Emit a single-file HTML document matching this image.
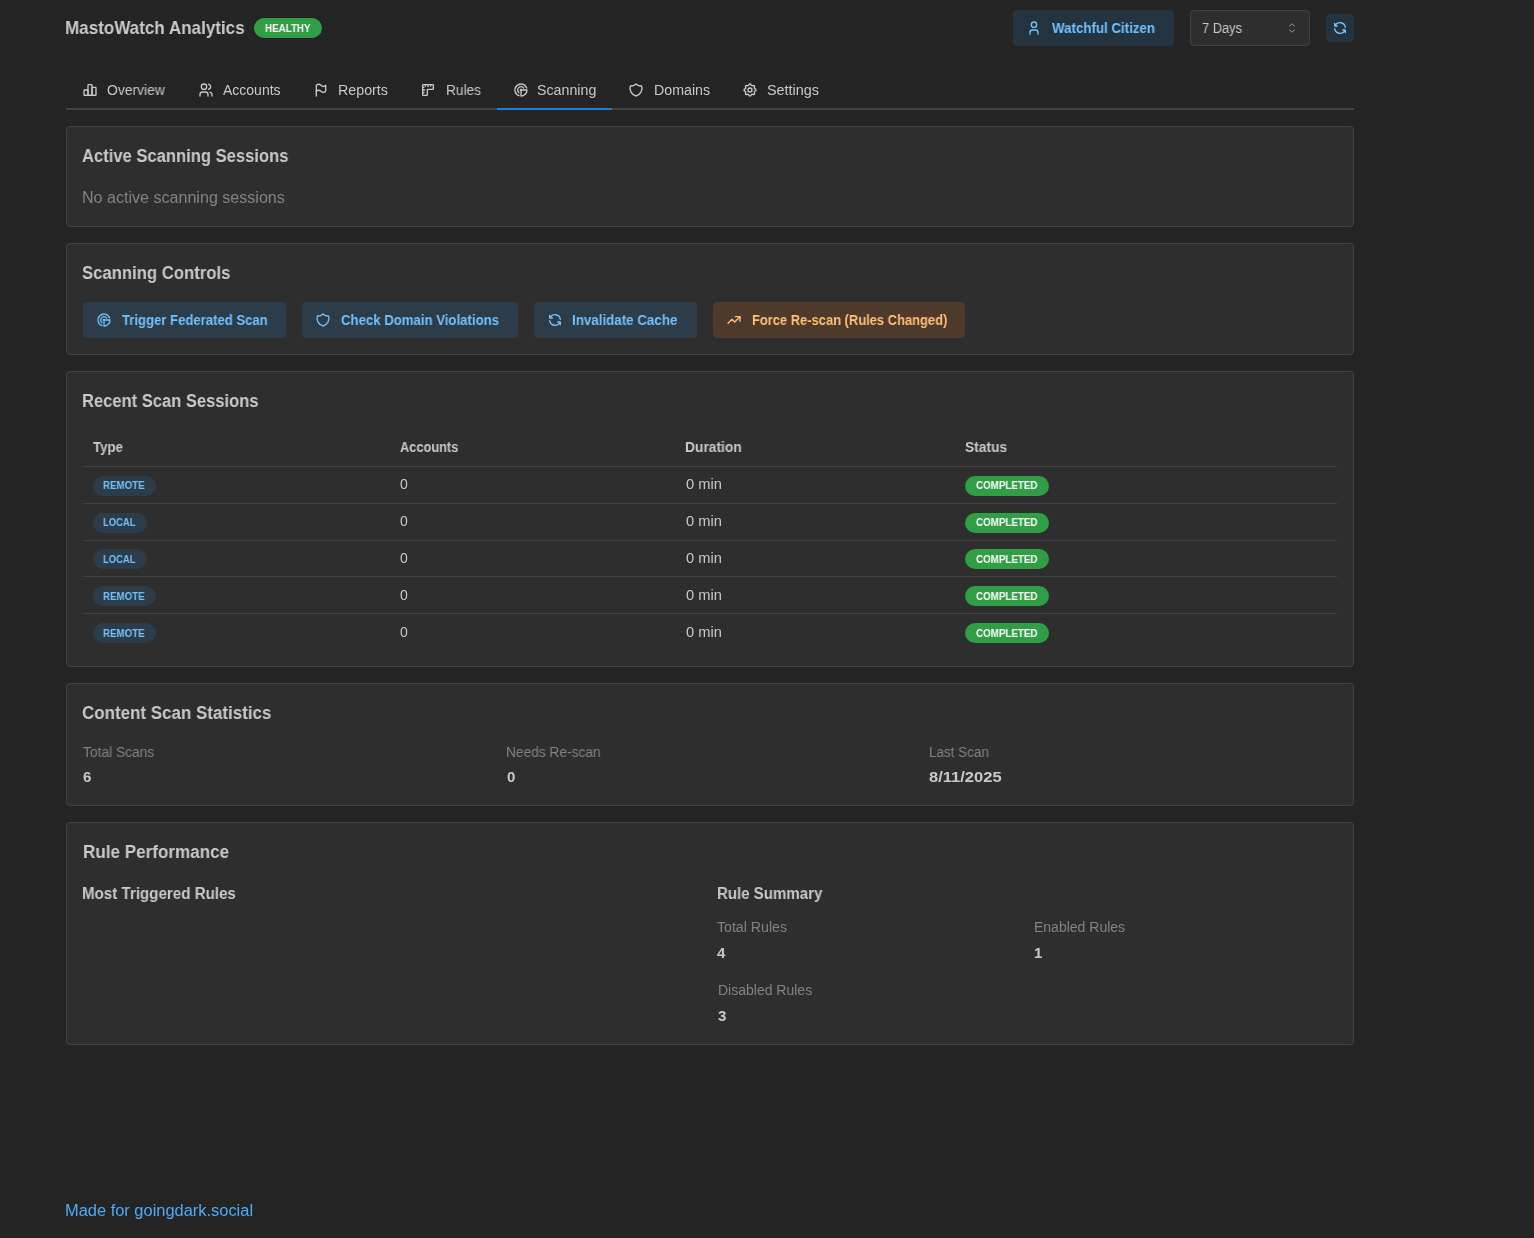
<!DOCTYPE html>
<html><head><meta charset="utf-8"><title>MastoWatch Analytics</title>
<style>
html,body{margin:0;padding:0}
body{background:#242424;width:1534px;height:1238px;overflow:hidden;position:relative;font-family:"Liberation Sans",sans-serif}
.t{position:absolute;line-height:1;white-space:nowrap;transform-origin:0 0;will-change:transform}
</style></head><body>
<div style='position:absolute;left:66px;top:126px;width:1286px;height:99px;background:#2e2e2e;border:1px solid #424242;border-radius:4px'></div>
<div style='position:absolute;left:66px;top:243px;width:1286px;height:110px;background:#2e2e2e;border:1px solid #424242;border-radius:4px'></div>
<div style='position:absolute;left:66px;top:371px;width:1286px;height:294px;background:#2e2e2e;border:1px solid #424242;border-radius:4px'></div>
<div style='position:absolute;left:66px;top:683px;width:1286px;height:121px;background:#2e2e2e;border:1px solid #424242;border-radius:4px'></div>
<div style='position:absolute;left:66px;top:822px;width:1286px;height:221px;background:#2e2e2e;border:1px solid #424242;border-radius:4px'></div>
<div style='position:absolute;left:254px;top:18px;width:68px;height:20px;background:#2f9e44;border-radius:10px'></div>
<div style='position:absolute;left:1013px;top:10px;width:161px;height:36px;background:rgba(34,139,230,0.15);border-radius:4px'></div>
<svg style='position:absolute;left:1026px;top:20px' width='16' height='16' viewBox='0 0 24 24' fill='none' stroke='#74c0fc' stroke-width='2' stroke-linecap='round' stroke-linejoin='round'><path d="M8 7a4 4 0 1 0 8 0a4 4 0 0 0 -8 0"/><path d="M6 21v-2a4 4 0 0 1 4 -4h4a4 4 0 0 1 4 4v2"/></svg>
<div style='position:absolute;left:1190px;top:10px;width:118px;height:34px;background:#2e2e2e;border:1px solid #424242;border-radius:4px'></div>
<svg style='position:absolute;left:1284px;top:20px' width='16' height='16' viewBox='0 0 15 15' fill='#828282'><path d='M4.93179 5.43179C4.75605 5.60753 4.75605 5.89245 4.93179 6.06819C5.10753 6.24392 5.39245 6.24392 5.56819 6.06819L7.49999 4.13638L9.43179 6.06819C9.60753 6.24392 9.89245 6.24392 10.0682 6.06819C10.2439 5.89245 10.2439 5.60753 10.0682 5.43179L7.81819 3.18179C7.73379 3.0974 7.61933 3.04999 7.49999 3.04999C7.38064 3.04999 7.26618 3.0974 7.18179 3.18179L4.93179 5.43179ZM10.0682 9.56819C10.2439 9.39245 10.2439 9.10753 10.0682 8.93179C9.89245 8.75606 9.60753 8.75606 9.43179 8.93179L7.49999 10.8636L5.56819 8.93179C5.39245 8.75606 5.10753 8.75606 4.93179 8.93179C4.75605 9.10753 4.75605 9.39245 4.93179 9.56819L7.18179 11.8182C7.26618 11.9026 7.38064 11.95 7.49999 11.95C7.61933 11.95 7.73379 11.9026 7.81819 11.8182L10.0682 9.56819Z'/></svg>
<div style='position:absolute;left:1326px;top:14px;width:28px;height:28px;background:rgba(34,139,230,0.15);border-radius:4px'></div>
<svg style='position:absolute;left:1332px;top:20px' width='16' height='16' viewBox='0 0 24 24' fill='none' stroke='#74c0fc' stroke-width='2' stroke-linecap='round' stroke-linejoin='round'><path d="M20 11a8.1 8.1 0 0 0 -15.5 -2m-.5 -4v4h4"/><path d="M4 13a8.1 8.1 0 0 0 15.5 2m.5 4v-4h-4"/></svg>
<div style='position:absolute;left:66px;top:108px;width:1288px;height:2px;background:#424242'></div>
<div style='position:absolute;left:497px;top:108px;width:115px;height:2px;background:#1c7ed6'></div>
<svg style='position:absolute;left:82px;top:82px' width='16' height='16' viewBox='0 0 24 24' fill='none' stroke='#c9c9c9' stroke-width='2' stroke-linecap='round' stroke-linejoin='round'><path d="M3 13a1 1 0 0 1 1 -1h4a1 1 0 0 1 1 1v6a1 1 0 0 1 -1 1h-4a1 1 0 0 1 -1 -1z"/><path d="M15 9a1 1 0 0 1 1 -1h4a1 1 0 0 1 1 1v10a1 1 0 0 1 -1 1h-4a1 1 0 0 1 -1 -1z"/><path d="M9 5a1 1 0 0 1 1 -1h4a1 1 0 0 1 1 1v14a1 1 0 0 1 -1 1h-4a1 1 0 0 1 -1 -1z"/><path d="M4 20h14"/></svg>
<svg style='position:absolute;left:198px;top:82px' width='16' height='16' viewBox='0 0 24 24' fill='none' stroke='#c9c9c9' stroke-width='2' stroke-linecap='round' stroke-linejoin='round'><path d="M5 7a4 4 0 1 0 8 0a4 4 0 1 0 -8 0"/><path d="M3 21v-2a4 4 0 0 1 4 -4h4a4 4 0 0 1 4 4v2"/><path d="M16 3.13a4 4 0 0 1 0 7.75"/><path d="M21 21v-2a4 4 0 0 0 -3 -3.85"/></svg>
<svg style='position:absolute;left:313px;top:82px' width='16' height='16' viewBox='0 0 24 24' fill='none' stroke='#c9c9c9' stroke-width='2' stroke-linecap='round' stroke-linejoin='round'><path d="M5 5a5 5 0 0 1 7 0a5 5 0 0 0 7 0v9a5 5 0 0 1 -7 0a5 5 0 0 0 -7 0v-9z"/><path d="M5 21v-7"/></svg>
<svg style='position:absolute;left:420px;top:82px' width='16' height='16' viewBox='0 0 24 24' fill='none' stroke='#c9c9c9' stroke-width='2' stroke-linecap='round' stroke-linejoin='round'><path d="M5 4h14a1 1 0 0 1 1 1v5a1 1 0 0 1 -1 1h-7a1 1 0 0 0 -1 1v7a1 1 0 0 1 -1 1h-5a1 1 0 0 1 -1 -1v-14a1 1 0 0 1 1 -1"/><path d="M4 8l2 0"/><path d="M4 12l3 0"/><path d="M4 16l2 0"/><path d="M8 4l0 2"/><path d="M12 4l0 3"/><path d="M16 4l0 2"/></svg>
<svg style='position:absolute;left:513px;top:82px' width='16' height='16' viewBox='0 0 24 24' fill='none' stroke='#c9c9c9' stroke-width='2' stroke-linecap='round' stroke-linejoin='round'><path d="M21 12h-8a1 1 0 1 0 -1 1v8a9 9 0 0 0 9 -9"/><path d="M16 9a5 5 0 1 0 -7 7"/><path d="M20.486 9a9 9 0 1 0 -11.482 11.495"/></svg>
<svg style='position:absolute;left:628px;top:82px' width='16' height='16' viewBox='0 0 24 24' fill='none' stroke='#c9c9c9' stroke-width='2' stroke-linecap='round' stroke-linejoin='round'><path d="M12 3a12 12 0 0 0 8.5 3a12 12 0 0 1 -8.5 15a12 12 0 0 1 -8.5 -15a12 12 0 0 0 8.5 -3"/></svg>
<svg style='position:absolute;left:742px;top:82px' width='16' height='16' viewBox='0 0 24 24' fill='none' stroke='#c9c9c9' stroke-width='2' stroke-linecap='round' stroke-linejoin='round'><path d="M10.325 4.317c.426 -1.756 2.924 -1.756 3.35 0a1.724 1.724 0 0 0 2.573 1.066c1.543 -.94 3.31 .826 2.37 2.37a1.724 1.724 0 0 0 1.065 2.572c1.756 .426 1.756 2.924 0 3.35a1.724 1.724 0 0 0 -1.066 2.573c.94 1.543 -.826 3.31 -2.37 2.37a1.724 1.724 0 0 0 -2.572 1.065c-.426 1.756 -2.924 1.756 -3.35 0a1.724 1.724 0 0 0 -2.573 -1.066c-1.543 .94 -3.31 -.826 -2.37 -2.37a1.724 1.724 0 0 0 -1.065 -2.572c-1.756 -.426 -1.756 -2.924 0 -3.35a1.724 1.724 0 0 0 1.066 -2.573c-.94 -1.543 .826 -3.31 2.37 -2.37c1 .608 2.296 .07 2.572 -1.065z"/><path d="M9 12a3 3 0 1 0 6 0a3 3 0 0 0 -6 0"/></svg>
<div style='position:absolute;left:83px;top:302px;width:203px;height:36px;background:rgba(34,139,230,0.15);border-radius:4px'></div>
<svg style='position:absolute;left:96px;top:312px' width='16' height='16' viewBox='0 0 24 24' fill='none' stroke='#74c0fc' stroke-width='2' stroke-linecap='round' stroke-linejoin='round'><path d="M21 12h-8a1 1 0 1 0 -1 1v8a9 9 0 0 0 9 -9"/><path d="M16 9a5 5 0 1 0 -7 7"/><path d="M20.486 9a9 9 0 1 0 -11.482 11.495"/></svg>
<div style='position:absolute;left:302px;top:302px;width:216px;height:36px;background:rgba(34,139,230,0.15);border-radius:4px'></div>
<svg style='position:absolute;left:315px;top:312px' width='16' height='16' viewBox='0 0 24 24' fill='none' stroke='#74c0fc' stroke-width='2' stroke-linecap='round' stroke-linejoin='round'><path d="M12 3a12 12 0 0 0 8.5 3a12 12 0 0 1 -8.5 15a12 12 0 0 1 -8.5 -15a12 12 0 0 0 8.5 -3"/></svg>
<div style='position:absolute;left:534px;top:302px;width:163px;height:36px;background:rgba(34,139,230,0.15);border-radius:4px'></div>
<svg style='position:absolute;left:547px;top:312px' width='16' height='16' viewBox='0 0 24 24' fill='none' stroke='#74c0fc' stroke-width='2' stroke-linecap='round' stroke-linejoin='round'><path d="M20 11a8.1 8.1 0 0 0 -15.5 -2m-.5 -4v4h4"/><path d="M4 13a8.1 8.1 0 0 0 15.5 2m.5 4v-4h-4"/></svg>
<div style='position:absolute;left:713px;top:302px;width:252px;height:36px;background:rgba(253,126,20,0.15);border-radius:4px'></div>
<svg style='position:absolute;left:726px;top:312px' width='16' height='16' viewBox='0 0 24 24' fill='none' stroke='#ffc078' stroke-width='2' stroke-linecap='round' stroke-linejoin='round'><path d="M3 17l6 -6l4 4l8 -8"/><path d="M14 7l7 0l0 7"/></svg>
<div style='position:absolute;left:83px;top:466px;width:1254px;height:1px;background:#424242'></div>
<div style='position:absolute;left:83px;top:503px;width:1254px;height:1px;background:#424242'></div>
<div style='position:absolute;left:83px;top:540px;width:1254px;height:1px;background:#424242'></div>
<div style='position:absolute;left:83px;top:576px;width:1254px;height:1px;background:#424242'></div>
<div style='position:absolute;left:83px;top:613px;width:1254px;height:1px;background:#424242'></div>
<div style='position:absolute;left:93px;top:476px;width:63px;height:20px;background:rgba(34,139,230,0.15);border-radius:10px'></div>
<div style='position:absolute;left:965px;top:476px;width:84px;height:20px;background:#2f9e44;border-radius:10px'></div>
<div style='position:absolute;left:93px;top:513px;width:54px;height:20px;background:rgba(34,139,230,0.15);border-radius:10px'></div>
<div style='position:absolute;left:965px;top:513px;width:84px;height:20px;background:#2f9e44;border-radius:10px'></div>
<div style='position:absolute;left:93px;top:549px;width:54px;height:20px;background:rgba(34,139,230,0.15);border-radius:10px'></div>
<div style='position:absolute;left:965px;top:549px;width:84px;height:20px;background:#2f9e44;border-radius:10px'></div>
<div style='position:absolute;left:93px;top:586px;width:63px;height:20px;background:rgba(34,139,230,0.15);border-radius:10px'></div>
<div style='position:absolute;left:965px;top:586px;width:84px;height:20px;background:#2f9e44;border-radius:10px'></div>
<div style='position:absolute;left:93px;top:623px;width:63px;height:20px;background:rgba(34,139,230,0.15);border-radius:10px'></div>
<div style='position:absolute;left:965px;top:623px;width:84px;height:20px;background:#2f9e44;border-radius:10px'></div>
<div class='t' style='left:64.78px;top:18px;font-size:19px;font-weight:700;color:#c9c9c9;transform:scaleX(0.8971);'>MastoWatch Analytics</div>
<div class='t' style='left:265.12px;top:23px;font-size:11px;font-weight:700;color:#ffffff;transform:scaleX(0.8907);'>HEALTHY</div>
<div class='t' style='left:1051.81px;top:21px;font-size:14px;font-weight:700;color:#74c0fc;transform:scaleX(0.9502);'>Watchful Citizen</div>
<div class='t' style='left:1202.11px;top:21px;font-size:14px;font-weight:400;color:#c9c9c9;transform:scaleX(0.9197);'>7 Days</div>
<div class='t' style='left:107.33px;top:83px;font-size:14px;font-weight:400;color:#c9c9c9;transform:scaleX(0.9908);'>Overview</div>
<div class='t' style='left:223.19px;top:83px;font-size:14px;font-weight:400;color:#c9c9c9;transform:scaleX(0.9973);'>Accounts</div>
<div class='t' style='left:338.28px;top:83px;font-size:14px;font-weight:400;color:#c9c9c9;transform:scaleX(1.0195);'>Reports</div>
<div class='t' style='left:445.84px;top:83px;font-size:14px;font-weight:400;color:#c9c9c9;transform:scaleX(0.9785);'>Rules</div>
<div class='t' style='left:537.48px;top:83px;font-size:14px;font-weight:400;color:#c9c9c9;transform:scaleX(1.0155);'>Scanning</div>
<div class='t' style='left:653.50px;top:83px;font-size:14px;font-weight:400;color:#c9c9c9;transform:scaleX(1.0146);'>Domains</div>
<div class='t' style='left:766.71px;top:83px;font-size:14px;font-weight:400;color:#c9c9c9;transform:scaleX(1.0289);'>Settings</div>
<div class='t' style='left:81.88px;top:147px;font-size:18px;font-weight:700;color:#c9c9c9;transform:scaleX(0.9215);'>Active Scanning Sessions</div>
<div class='t' style='left:81.81px;top:190px;font-size:16px;font-weight:400;color:#828282;transform:scaleX(1.0047);'>No active scanning sessions</div>
<div class='t' style='left:82.24px;top:264px;font-size:18px;font-weight:700;color:#c9c9c9;transform:scaleX(0.9274);'>Scanning Controls</div>
<div class='t' style='left:122.31px;top:313px;font-size:14px;font-weight:700;color:#74c0fc;transform:scaleX(0.9361);'>Trigger Federated Scan</div>
<div class='t' style='left:341.07px;top:313px;font-size:14px;font-weight:700;color:#74c0fc;transform:scaleX(0.9414);'>Check Domain Violations</div>
<div class='t' style='left:572.26px;top:313px;font-size:14px;font-weight:700;color:#74c0fc;transform:scaleX(0.9534);'>Invalidate Cache</div>
<div class='t' style='left:751.58px;top:313px;font-size:14px;font-weight:700;color:#ffc078;transform:scaleX(0.9228);'>Force Re-scan (Rules Changed)</div>
<div class='t' style='left:82.36px;top:392px;font-size:18px;font-weight:700;color:#c9c9c9;transform:scaleX(0.9194);'>Recent Scan Sessions</div>
<div class='t' style='left:92.79px;top:440px;font-size:14px;font-weight:700;color:#c9c9c9;transform:scaleX(0.9480);'>Type</div>
<div class='t' style='left:399.78px;top:440px;font-size:14px;font-weight:700;color:#c9c9c9;transform:scaleX(0.9140);'>Accounts</div>
<div class='t' style='left:685.49px;top:440px;font-size:14px;font-weight:700;color:#c9c9c9;transform:scaleX(0.9854);'>Duration</div>
<div class='t' style='left:964.65px;top:440px;font-size:14px;font-weight:700;color:#c9c9c9;transform:scaleX(0.9834);'>Status</div>
<div class='t' style='left:102.66px;top:480px;font-size:11px;font-weight:700;color:#74c0fc;transform:scaleX(0.8853);'>REMOTE</div>
<div class='t' style='left:400.20px;top:477px;font-size:14px;font-weight:400;color:#c9c9c9;'>0</div>
<div class='t' style='left:686.40px;top:477px;font-size:14px;font-weight:400;color:#c9c9c9;transform:scaleX(1.0465);'>0 min</div>
<div class='t' style='left:975.80px;top:480px;font-size:11px;font-weight:700;color:#ffffff;transform:scaleX(0.8907);'>COMPLETED</div>
<div class='t' style='left:102.70px;top:517px;font-size:11px;font-weight:700;color:#74c0fc;transform:scaleX(0.8547);'>LOCAL</div>
<div class='t' style='left:400.20px;top:514px;font-size:14px;font-weight:400;color:#c9c9c9;'>0</div>
<div class='t' style='left:686.40px;top:514px;font-size:14px;font-weight:400;color:#c9c9c9;transform:scaleX(1.0465);'>0 min</div>
<div class='t' style='left:975.80px;top:517px;font-size:11px;font-weight:700;color:#ffffff;transform:scaleX(0.8907);'>COMPLETED</div>
<div class='t' style='left:102.70px;top:554px;font-size:11px;font-weight:700;color:#74c0fc;transform:scaleX(0.8547);'>LOCAL</div>
<div class='t' style='left:400.20px;top:551px;font-size:14px;font-weight:400;color:#c9c9c9;'>0</div>
<div class='t' style='left:686.40px;top:551px;font-size:14px;font-weight:400;color:#c9c9c9;transform:scaleX(1.0465);'>0 min</div>
<div class='t' style='left:975.80px;top:554px;font-size:11px;font-weight:700;color:#ffffff;transform:scaleX(0.8907);'>COMPLETED</div>
<div class='t' style='left:102.66px;top:591px;font-size:11px;font-weight:700;color:#74c0fc;transform:scaleX(0.8853);'>REMOTE</div>
<div class='t' style='left:400.20px;top:588px;font-size:14px;font-weight:400;color:#c9c9c9;'>0</div>
<div class='t' style='left:686.40px;top:588px;font-size:14px;font-weight:400;color:#c9c9c9;transform:scaleX(1.0465);'>0 min</div>
<div class='t' style='left:975.80px;top:591px;font-size:11px;font-weight:700;color:#ffffff;transform:scaleX(0.8907);'>COMPLETED</div>
<div class='t' style='left:102.66px;top:628px;font-size:11px;font-weight:700;color:#74c0fc;transform:scaleX(0.8853);'>REMOTE</div>
<div class='t' style='left:400.20px;top:625px;font-size:14px;font-weight:400;color:#c9c9c9;'>0</div>
<div class='t' style='left:686.40px;top:625px;font-size:14px;font-weight:400;color:#c9c9c9;transform:scaleX(1.0465);'>0 min</div>
<div class='t' style='left:975.80px;top:628px;font-size:11px;font-weight:700;color:#ffffff;transform:scaleX(0.8907);'>COMPLETED</div>
<div class='t' style='left:82.27px;top:704px;font-size:18px;font-weight:700;color:#c9c9c9;transform:scaleX(0.9421);'>Content Scan Statistics</div>
<div class='t' style='left:82.57px;top:745px;font-size:14px;font-weight:400;color:#828282;transform:scaleX(0.9848);'>Total Scans</div>
<div class='t' style='left:82.76px;top:769px;font-size:15px;font-weight:700;color:#c9c9c9;'>6</div>
<div class='t' style='left:505.57px;top:745px;font-size:14px;font-weight:400;color:#828282;transform:scaleX(0.9802);'>Needs Re-scan</div>
<div class='t' style='left:506.61px;top:769px;font-size:15px;font-weight:700;color:#c9c9c9;'>0</div>
<div class='t' style='left:928.58px;top:745px;font-size:14px;font-weight:400;color:#828282;transform:scaleX(0.9612);'>Last Scan</div>
<div class='t' style='left:929.12px;top:769px;font-size:15px;font-weight:700;color:#c9c9c9;transform:scaleX(1.1020);'>8/11/2025</div>
<div class='t' style='left:82.57px;top:843px;font-size:18px;font-weight:700;color:#c9c9c9;transform:scaleX(0.9486);'>Rule Performance</div>
<div class='t' style='left:81.96px;top:886px;font-size:16px;font-weight:700;color:#c9c9c9;transform:scaleX(0.9453);'>Most Triggered Rules</div>
<div class='t' style='left:716.71px;top:886px;font-size:16px;font-weight:700;color:#c9c9c9;transform:scaleX(0.9400);'>Rule Summary</div>
<div class='t' style='left:717.31px;top:920px;font-size:14px;font-weight:400;color:#828282;transform:scaleX(1.0102);'>Total Rules</div>
<div class='t' style='left:717.40px;top:945px;font-size:15px;font-weight:700;color:#c9c9c9;'>4</div>
<div class='t' style='left:1034.29px;top:920px;font-size:14px;font-weight:400;color:#828282;'>Enabled Rules</div>
<div class='t' style='left:1034.45px;top:945px;font-size:15px;font-weight:700;color:#c9c9c9;'>1</div>
<div class='t' style='left:717.58px;top:983px;font-size:14px;font-weight:400;color:#828282;transform:scaleX(0.9954);'>Disabled Rules</div>
<div class='t' style='left:718.34px;top:1008px;font-size:15px;font-weight:700;color:#c9c9c9;'>3</div>
<div class='t' style='left:65.02px;top:1203px;font-size:16px;font-weight:400;color:#4dabf7;transform:scaleX(1.0263);'>Made for goingdark.social</div>
</body></html>
